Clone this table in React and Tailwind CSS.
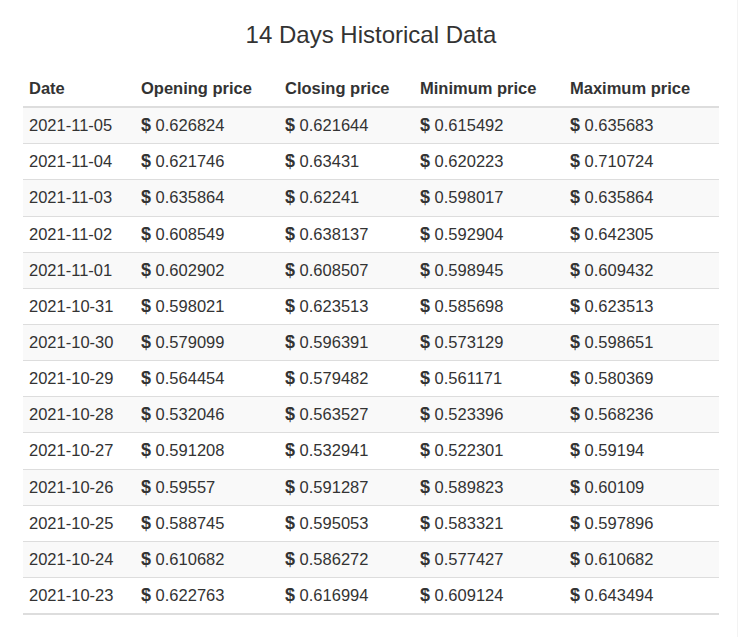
const rows = [
  ["2021-11-05", "0.626824", "0.621644", "0.615492", "0.635683"],
  ["2021-11-04", "0.621746", "0.63431", "0.620223", "0.710724"],
  ["2021-11-03", "0.635864", "0.62241", "0.598017", "0.635864"],
  ["2021-11-02", "0.608549", "0.638137", "0.592904", "0.642305"],
  ["2021-11-01", "0.602902", "0.608507", "0.598945", "0.609432"],
  ["2021-10-31", "0.598021", "0.623513", "0.585698", "0.623513"],
  ["2021-10-30", "0.579099", "0.596391", "0.573129", "0.598651"],
  ["2021-10-29", "0.564454", "0.579482", "0.561171", "0.580369"],
  ["2021-10-28", "0.532046", "0.563527", "0.523396", "0.568236"],
  ["2021-10-27", "0.591208", "0.532941", "0.522301", "0.59194"],
  ["2021-10-26", "0.59557", "0.591287", "0.589823", "0.60109"],
  ["2021-10-25", "0.588745", "0.595053", "0.583321", "0.597896"],
  ["2021-10-24", "0.610682", "0.586272", "0.577427", "0.610682"],
  ["2021-10-23", "0.622763", "0.616994", "0.609124", "0.643494"],
];

const headers = ["Date", "Opening price", "Closing price", "Minimum price", "Maximum price"];
const widths = ["w-[112px]", "w-[144px]", "w-[135px]", "w-[150px]", "w-[155px]"];

// dollar glyph is heavier than the digits in the original
const Price = ({ value }) => (
  <span>
    <span className="font-bold text-[18px]">$</span> {value}
  </span>
);

export default function App() {
  return (
    <div className="min-h-[637px] bg-white font-['Liberation_Sans',Arial,sans-serif] text-[#333]">
      <div className="w-[738px] min-h-[637px] border-r border-[#f3f3f3]">
        <div className="ml-[23px] w-[696px]">
          <h3 className="pt-[20px] text-center text-[24px] leading-[30px] h-[71px]">
            14 Days Historical Data
          </h3>
          <table className="w-full border-collapse text-[16.5px] leading-[19.14px]">
            <thead>
              <tr>
                {headers.map((h, i) => (
                  <th
                    key={h}
                    className={`${widths[i]} text-left font-bold px-[6px] py-2 border-b-2 border-[#ddd]`}
                  >
                    {h}
                  </th>
                ))}
              </tr>
            </thead>
            <tbody>
              {rows.map((r, idx) => {
                const last = idx === rows.length - 1;
                const cell = `px-[6px] py-2 border-[#ddd] ${last ? "border-b-2" : "border-b"}`;
                return (
                  <tr key={r[0]} className={idx % 2 === 0 ? "bg-[#f9f9f9]" : "bg-white"}>
                    <td className={cell}>{r[0]}</td>
                    {r.slice(1).map((v, j) => (
                      <td key={j} className={cell}>
                        <Price value={v} />
                      </td>
                    ))}
                  </tr>
                );
              })}
            </tbody>
          </table>
        </div>
      </div>
    </div>
  );
}
